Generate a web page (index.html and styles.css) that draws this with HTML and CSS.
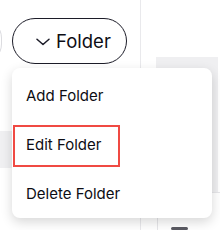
FILE: index.html
```html
<!DOCTYPE html>
<html lang="en">
<head>
    <meta charset="UTF-8">
    <title>Folder Menu</title>
    <link rel="stylesheet" href="styles.css">
</head>
<body>
    <div class="page">
        <div class="sidebar">
            <div class="toolbar">
                <div class="pill ghost"></div>
                <button class="pill folder-button">
                    <svg class="chevron" width="14" height="8" viewBox="0 0 14 8">
                        <path d="M1 1.2 L7 6.5 L13 1.2" fill="none" stroke="#1c1c28" stroke-width="1.5" stroke-linecap="round" stroke-linejoin="round"/>
                    </svg>
                    Folder
                </button>
            </div>
            <div class="side-strip"></div>
        </div>

        <div class="content">
            <div class="panel"></div>
            <div class="table-rest">
                <div class="handle"></div>
            </div>
        </div>

        <div class="menu">
            <div class="menu-item">Add Folder</div>
            <div class="menu-item selected">Edit Folder</div>
            <div class="menu-item">Delete Folder</div>
        </div>
    </div>
</body>
</html>
```

FILE: styles.css
```css
body {
    margin: 0;
    width: 220px;
    height: 230px;
    overflow: hidden;
    background: #ffffff;
    font-family: Inter, "Noto Sans", sans-serif;
    color: #111118;
}

.page {
    position: relative;
    display: flex;
    height: 230px;
}

.sidebar {
    width: 140px;
    flex-shrink: 0;
    border-right: 1px solid #e9e9ec;
    padding-top: 18px;
}

.toolbar {
    display: flex;
    gap: 10px;
    margin-left: -38px;
}

.pill {
    height: 46px;
    box-sizing: border-box;
    border-radius: 23px;
    background: #ffffff;
}

.ghost {
    width: 40px;
    border: 1px solid #dcdce0;
}

.folder-button {
    display: flex;
    align-items: center;
    gap: 6px;
    width: 115px;
    padding: 0 0 0 23px;
    border: 1px solid #1c1c28;
    font-family: inherit;
    font-size: 18.5px;
    font-weight: 400;
    color: #0d0d14;
    cursor: pointer;
}

.chevron {
    margin-top: 2px;
}

.side-strip {
    width: 12px;
    height: 37px;
    margin-top: 67px;
    background: #f0f0f2;
}

.content {
    flex: 1;
    padding-top: 57px;
}

.panel {
    width: 62px;
    height: 135px;
    margin-left: 15px;
    background: #efeff1;
}

.table-rest {
    height: 38px;
    margin-left: 16px;
    border-left: 1px solid #e6e6e9;
    border-top: 1px solid #e6e6e9;
}

.handle {
    width: 17px;
    height: 3px;
    margin: 34px 0 0 13px;
    border-radius: 2px;
    background: #5a5a62;
}

.menu {
    position: absolute;
    left: 12px;
    top: 68px;
    width: 200px;
    height: 150px;
    box-sizing: border-box;
    padding: 8px 0 0 1px;
    display: flex;
    flex-direction: column;
    align-items: flex-start;
    gap: 7px;
    background: #ffffff;
    border-radius: 8px;
    box-shadow: 0 4px 12px rgba(0, 0, 0, 0.16);
}

.menu-item {
    height: 42px;
    box-sizing: border-box;
    padding: 0 13px 4px 11px;
    display: flex;
    align-items: center;
    font-size: 15px;
    color: #0d0d14;
    border: 2px solid transparent;
}

.menu-item.selected {
    border-color: #f04a43;
    width: 107px;
}
```
